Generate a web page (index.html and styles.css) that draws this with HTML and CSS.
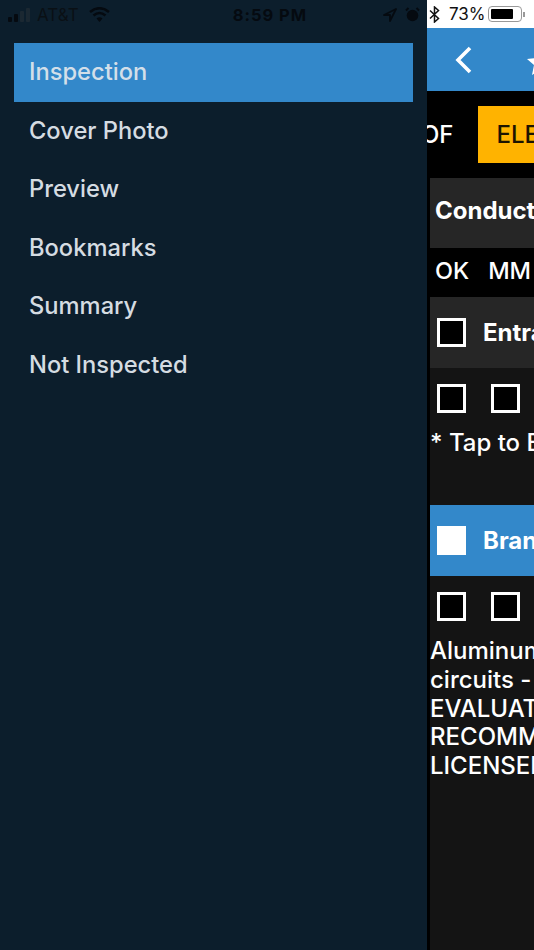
FILE: index.html
```html
<!DOCTYPE html>
<html>
<head>
<meta charset="UTF-8">
<title>Inspection</title>
<link rel="stylesheet" href="styles.css">
</head>
<body>
<div class="app">
  <div class="drawer">
    <div class="drawer-status">
      <div class="status-left">
        <svg class="signal" width="24" height="14" viewBox="0 0 24 14">
          <rect x="0" y="9" width="4" height="5" rx="1" fill="#050a10"/>
          <rect x="6" y="6" width="4" height="8" rx="1" fill="#050a10"/>
          <rect x="12" y="3" width="4" height="11" rx="1" fill="#1b2832"/>
          <rect x="18" y="0" width="4" height="14" rx="1" fill="#1b2832"/>
        </svg>
        <span class="carrier">AT&amp;T</span>
        <svg class="wifi" width="21" height="15" viewBox="0 0 21 15">
          <path d="M1 5 Q10.500 -2.500 20 5" fill="none" stroke="#050a10" stroke-width="2.600"/>
          <path d="M4.500 8.500 Q10.500 3.500 16.500 8.500" fill="none" stroke="#050a10" stroke-width="2.600"/>
          <path d="M7.500 11.500 Q10.500 9 13.500 11.500 L10.500 15 Z" fill="#050a10"/>
        </svg>
      </div>
      <span class="clock">8:59 PM</span>
      <div class="status-right">
        <svg width="14" height="14" viewBox="0 0 14 14">
          <path d="M13 1 L1 7 L7 7 L7 13 Z" fill="none" stroke="#050a10" stroke-width="1.800" stroke-linejoin="round"/>
        </svg>
        <svg width="15" height="15" viewBox="0 0 15 15">
          <circle cx="7.500" cy="8.500" r="5.800" fill="#050a10"/>
          <path d="M1 3.500 L3.500 1 M14 3.500 L11.500 1" stroke="#050a10" stroke-width="2"/>
        </svg>
      </div>
    </div>
    <ul class="menu">
      <li class="menu-item active">Inspection</li>
      <li class="menu-item">Cover Photo</li>
      <li class="menu-item">Preview</li>
      <li class="menu-item">Bookmarks</li>
      <li class="menu-item">Summary</li>
      <li class="menu-item">Not Inspected</li>
    </ul>
  </div>

  <div class="main">
    <div class="main-status">
      <svg width="11" height="17" viewBox="0 0 11 17">
        <path d="M1 4.500 L9.500 12.500 L5.500 16 L5.500 1 L9.500 4.500 L1 12.500" fill="none" stroke="#111" stroke-width="1.500"/>
      </svg>
      <span class="battery-pct">73%</span>
      <div class="battery"><div class="battery-fill"></div></div>
      <div class="battery-cap"></div>
    </div>
    <div class="navbar">
      <svg class="back" width="20" height="30" viewBox="0 0 20 30">
        <path d="M16 3 L4 15 L16 27" fill="none" stroke="#fff" stroke-width="3.600"/>
      </svg>
      <svg class="star" width="28" height="28" viewBox="0 0 28 28">
        <path d="M14 1 L18 10 L27 11 L20 17 L22 27 L14 22 L6 27 L8 17 L1 11 L10 10 Z" fill="#fff"/>
      </svg>
    </div>
    <div class="content">
      <div class="tabs">
        <span class="tab">ROOF</span>
        <span class="tab tab-on">ELECTRICAL</span>
      </div>
      <div class="section-title">Conductors</div>
      <div class="legend"><span>OK</span><span>MM</span></div>
      <div class="item-head">
        <span class="box"></span>
        <span class="item-name">Entrance</span>
      </div>
      <div class="item-body short">
        <div class="boxes"><span class="box"></span><span class="box"></span></div>
        <p class="note">* Tap to Edit</p>
      </div>
      <div class="item-head selected">
        <span class="box box-on"></span>
        <span class="item-name">Branch</span>
      </div>
      <div class="item-body">
        <div class="boxes"><span class="box"></span><span class="box"></span></div>
        <p class="note">Aluminum<br>circuits - wiring<br>EVALUATE<br>RECOMMEND<br>LICENSED</p>
      </div>
    </div>
  </div>
</div>
</body>
</html>
```

FILE: styles.css
```css
*{ padding:0; margin:0; box-sizing:border-box; }
ul,li{ list-style:none; }
body{ width:534px; height:950px; overflow:hidden; background:#000; font-family:"Inter","Liberation Sans",sans-serif; }

.app{ display:flex; width:534px; height:950px; }

/*drawer*/
.drawer{ width:427px; flex:none; background:#0c1e2c; }
.drawer-status{ display:flex; align-items:center; height:28px; padding:1px 7px 0 8px; color:#050a10; }
.status-left{ display:flex; align-items:center; }
.status-right{ display:flex; align-items:center; gap:8px; margin-left:auto; }
.carrier{ font-size:17px; margin:0 10px 0 5px; color:#0a1015; }
.clock{ font-size:16.500px; font-weight:700; letter-spacing:1px; color:#050a10; margin-left:123px; }
.menu{ padding:15px 14px 0; }
.menu-item{ height:58.400px; line-height:58px; padding-left:15px; font-size:23.700px; font-weight:500; color:#d5dce2; }
.menu-item.active{ height:59px; background:#3388ca; color:#d3dfe9; }

/*main*/
.main{ width:107px; flex:none; overflow:hidden; color:#fff; }
.main-status{ display:flex; align-items:center; height:28px; background:#fff; color:#111; padding-left:2px; }
.battery-pct{ font-size:17px; margin:0 2px 0 9px; white-space:nowrap; }
.battery{ width:34px; height:16px; border:1px solid #999; border-radius:4px; padding:2px; flex:none; }
.battery-fill{ width:22px; height:100%; background:#000; border-radius:1px; }
.battery-cap{ width:2px; height:5px; margin-left:1px; background:#999; flex:none; }
.navbar{ display:flex; align-items:center; height:63px; background:#3388ca; padding:0 0 0 27px; gap:52px; }
.back,.star{ flex:none; }
.star{ margin-top:4px; }

.content{ height:859px; background:#000; padding-left:3px; overflow:hidden; white-space:nowrap; }
.tabs{ display:flex; align-items:center; height:87px; margin-left:-62px; gap:5px; width:300px; }
.tab{ font-size:24px; font-weight:500; line-height:57px; padding:0 19px; height:57px; }
.tab-on{ background:#ffb300; color:#1c1400; }
.section-title{ height:70px; line-height:66px; padding-left:5px; background:#262626; font-size:24px; font-weight:700; }
.legend{ display:flex; gap:19px; height:49px; line-height:46px; padding-left:5px; font-size:23.500px; font-weight:500; }
.item-head{ display:flex; align-items:center; gap:17px; height:71px; padding-left:7px; background:#262626; font-size:24px; font-weight:700; }
.item-head.selected{ background:#3388ca; }
.item-body{ background:#141414; height:384px; }
.item-body.short{ height:137px; }
.box{ display:block; width:29px; height:29px; border:3px solid #fff; background:#000; flex:none; }
.box-on{ background:#fff; }
.boxes{ display:flex; gap:25px; padding:16px 0 0 7px; }
.note{ font-size:24px; font-weight:500; line-height:28.800px; padding:16px 0 0 0; }
```
